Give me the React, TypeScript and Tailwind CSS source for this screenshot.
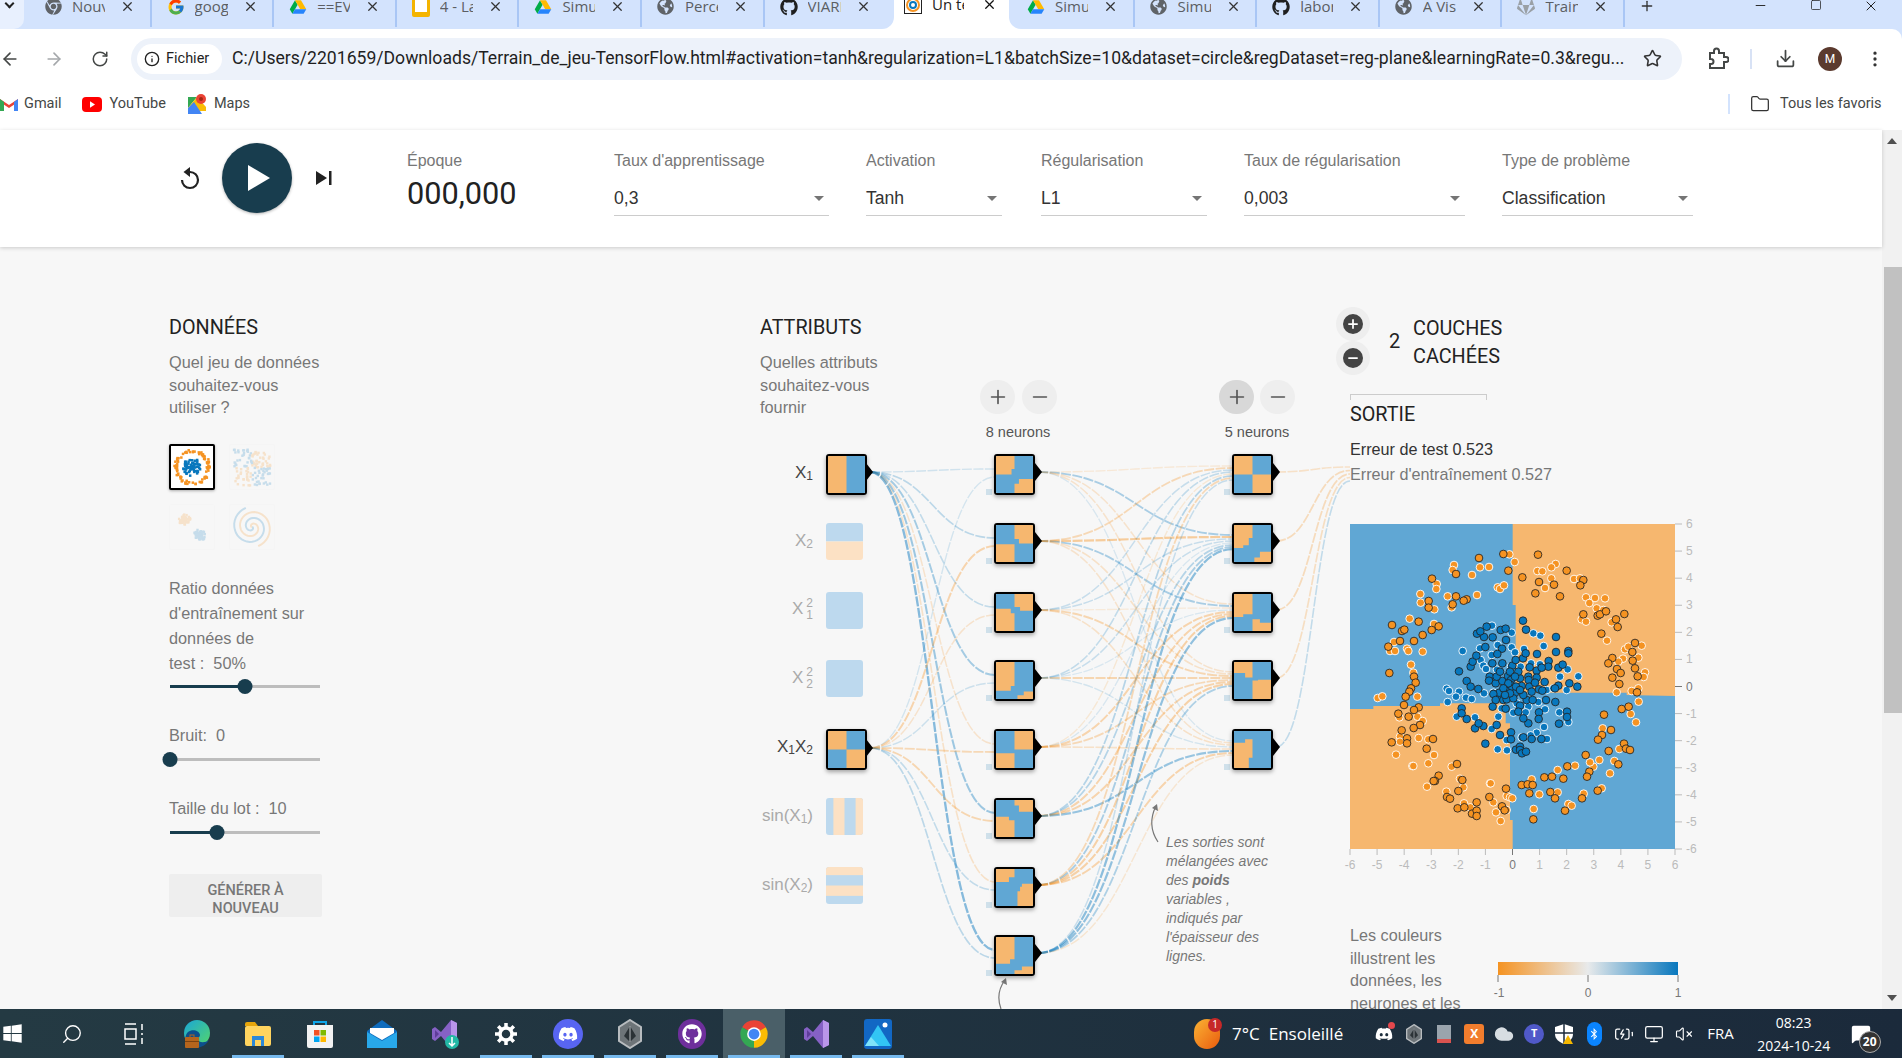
import React from 'react';
import { ArrowLeft, ArrowRight, RotateCw, Star, Download, MoreVertical, Folder, Info, X, Plus, Minus, Square, Search, VolumeX, Monitor, BatteryCharging, Cloud, MessageSquare } from 'lucide-react';
import { FaChrome, FaDiscord, FaGithub, FaGitlab, FaGlobeAmericas, FaWindows, FaBluetoothB } from 'react-icons/fa';
import { FcGoogle } from 'react-icons/fc';

const BLUE = '#0877bd';
const ORANGE = '#f59322';
const CELL_BLUE = '#60a7d4';
const CELL_ORANGE = '#f6b76f';

function seeded(seed: number) {
  let s = seed;
  return () => {
    s = (s * 16807) % 2147483647;
    return (s - 1) / 2147483646;
  };
}

/* ---------- small logos ---------- */

function DriveIcon({ size = 18 }: { size?: number }) {
  return (
    <svg width={size} height={size} viewBox="0 0 24 24">
      <path fill="#00ac47" d="M8 3 1 15l3.5 6 7-12z" />
      <path fill="#ffba00" d="M8 3h8l7 12h-8z" />
      <path fill="#2684fc" d="M4.5 21h15l3.5-6H8z" />
    </svg>
  );
}

function NoteIcon() {
  return (
    <svg width="18" height="20" viewBox="0 0 18 20">
      <rect x="0" y="0" width="18" height="20" rx="2" fill="#f4b400" />
      <rect x="3" y="3" width="12" height="12" fill="#fff" />
    </svg>
  );
}

function PlaygroundIcon() {
  return (
    <svg width="18" height="18" viewBox="0 0 18 18">
      <rect width="18" height="18" fill="#fff" stroke="#222" strokeWidth="2" />
      <circle cx="9" cy="9" r="6" fill="none" stroke={ORANGE} strokeWidth="2" />
      <circle cx="9" cy="9" r="3" fill="none" stroke={BLUE} strokeWidth="2" />
    </svg>
  );
}

function GmailIcon() {
  return (
    <svg width="18" height="14" viewBox="0 0 18 14">
      <path fill="#ea4335" d="M0 2 9 8l9-6v3l-9 6-9-6z" />
      <path fill="#4285f4" d="M14 5l4-3v12h-4z" />
      <path fill="#34a853" d="M0 2l4 3v9H0z" />
    </svg>
  );
}

function YoutubeIcon() {
  return (
    <svg width="20" height="15" viewBox="0 0 20 15">
      <rect width="20" height="15" rx="4" fill="#f00" />
      <path d="M8 4.2 13 7.5 8 10.800z" fill="#fff" />
    </svg>
  );
}

function MapsIcon() {
  return (
    <svg width="18" height="20" viewBox="0 0 18 20">
      <path fill="#34a853" d="M0 3h9L0 14z" />
      <path fill="#fbbc04" d="M0 14 9 3l9 10v4H0z" />
      <path fill="#4285f4" d="M0 14l6-6 8 12H0z" />
      <circle cx="13" cy="5" r="5" fill="#ea4335" />
      <circle cx="13" cy="5" r="2" fill="#a52714" />
    </svg>
  );
}

function ExtensionIcon() {
  return (
    <svg width="22" height="24" viewBox="0 0 22 24" fill="none" stroke="#444746" strokeWidth="2" className="ml-[25px]">
      <path d="M3 6h4V4a2.500 2.500 0 0 1 5 0v2h5v4h2a2 2 0 0 1 0 5h-2v6H3v-4h1a2.500 2.500 0 0 0 0-5H3z" />
    </svg>
  );
}

function EdgeIcon() {
  return (
    <svg width="30" height="30" viewBox="0 0 30 30">
      <defs>
        <linearGradient id="edge" x1="0" y1="0" x2="1" y2="1">
          <stop offset="0" stopColor="#1aa6d8" />
          <stop offset="1" stopColor="#54d66a" />
        </linearGradient>
      </defs>
      <circle cx="16" cy="14" r="13" fill="url(#edge)" />
      <path d="M9 27c-5-4-6-10-2-14 4-3 11-2 12 3 0 3-4 4-5 2 4 7 10 6 14 3-3 6-11 10-19 6z" fill="#0d4f8b" />
      <rect x="4" y="18" width="14" height="11" rx="1" fill="#b5651d" />
      <rect x="9" y="16" width="4" height="3" fill="none" stroke="#b5651d" />
      <rect x="4" y="22" width="14" height="1" fill="#7a4210" />
    </svg>
  );
}

function ExplorerIcon() {
  return (
    <svg width="28" height="26" viewBox="0 0 28 26">
      <path fill="#e6a50b" d="M1 3a2 2 0 0 1 2-2h8l3 4H1z" />
      <rect x="1" y="5" width="26" height="20" rx="2" fill="#ffd45f" />
      <path fill="#2b88d8" d="M8 25V15h12v10h-3v-6h-6v6z" />
    </svg>
  );
}

function StoreIcon() {
  return (
    <svg width="30" height="30" viewBox="0 0 30 30">
      <path d="M9 6V3h12v3" fill="none" stroke="#0ea5e9" strokeWidth="2" />
      <path fill="#f2f2f2" d="M2 6h26v21a2 2 0 0 1-2 2H4a2 2 0 0 1-2-2z" />
      <rect x="9" y="11" width="5.500" height="5.500" fill="#f25022" />
      <rect x="15.500" y="11" width="5.500" height="5.500" fill="#7fba00" />
      <rect x="9" y="17.500" width="5.500" height="5.500" fill="#00a4ef" />
      <rect x="15.500" y="17.500" width="5.500" height="5.500" fill="#ffb900" />
    </svg>
  );
}

function MailIcon() {
  return (
    <svg width="30" height="30" viewBox="0 0 30 30">
      <path fill="#0f6cbd" d="M15 1 30 12v17H0V12z" />
      <path fill="#fff" d="M3 9h24v5L15 21 3 14z" />
      <path fill="#28a8ea" d="M0 13l15 9 15-9v16H0z" />
    </svg>
  );
}

function VsIcon({ arrow = false }: { arrow?: boolean }) {
  return (
    <svg width="30" height="30" viewBox="0 0 30 30">
      <path fill="#8661c5" d="M3 10l3-2 6 5L22 1l6 3v22l-6 3-10-12-6 5-3-2z" />
      <path fill="#b995ea" d="M22 1l6 3v22l-6 3z" />
      <path fill="#5e3c99" d="M6 11v8l4-4z" />
      {arrow && <circle cx="23" cy="23" r="7" fill="#23b8a5" />}
      {arrow && <path d="M23 18v9m-3-3 3 3 3-3" stroke="#fff" strokeWidth="1.500" fill="none" />}
    </svg>
  );
}

function ChromeIcon() {
  return (
    <svg width="30" height="30" viewBox="0 0 24 24">
      <path fill="#ea4335" d="M12 1A11 11 0 0 1 21.500 6.500L12 12 2.500 6.500A11 11 0 0 1 12 1Z" />
      <path fill="#fbbc04" d="M21.500 6.500A11 11 0 0 1 12 23V12Z" />
      <path fill="#34a853" d="M2.500 6.500A11 11 0 0 0 12 23V12Z" />
      <circle cx="12" cy="12" r="5.500" fill="#fff" />
      <circle cx="12" cy="12" r="4.300" fill="#4285f4" />
    </svg>
  );
}

function PhotosIcon() {
  return (
    <svg width="28" height="30" viewBox="0 0 28 30">
      <rect width="28" height="30" rx="3" fill="#1267c4" />
      <path fill="#32c5f4" d="M1 27 14 6l13 21z" />
      <path fill="#7fe3f9" d="M1 27l6-9 8 9z" />
      <circle cx="21" cy="6" r="2.500" fill="#fff" />
    </svg>
  );
}

function HexIcon({ size = 30 }: { size?: number }) {
  return (
    <svg width={size * 0.8} height={size} viewBox="0 0 24 30">
      <path d="M12 1 23 8v14l-11 7-11-7V8z" fill="#6d7478" stroke="#b8bcbf" strokeWidth="2" />
      <path d="M12 7l6 10-6 6-6-6z" fill="#2b3236" />
      <path d="M12 7v16" stroke="#b8bcbf" />
    </svg>
  );
}

/* ---------- browser chrome ---------- */

const leftTabs: [React.ReactNode, string][] = [
  [<FaChrome size={17} color="#5f6368" />, 'Nouvel onglet'],
  [<FcGoogle size={18} />, 'google traduction'],
  [<DriveIcon />, '==EVAL'],
  [<NoteIcon />, '4 - Labo'],
  [<DriveIcon />, 'Simulation'],
  [<FaGlobeAmericas size={17} color="#5f6368" />, 'Perceptron'],
  [<FaGithub size={18} color="#1f1f1f" />, 'VIARENA'],
];

const rightTabs: [React.ReactNode, string][] = [
  [<DriveIcon />, 'Simulation'],
  [<FaGlobeAmericas size={17} color="#5f6368" />, 'Simulation'],
  [<FaGithub size={18} color="#1f1f1f" />, 'laboratoire'],
  [<FaGlobeAmericas size={17} color="#5f6368" />, 'A Visual'],
  [<FaGitlab size={18} color="#9aa0a6" />, 'Training'],
];

function Tab({ icon, title, last }: { icon: React.ReactNode; title: string; last?: boolean }) {
  return (
    <div className={`flex items-center w-[122.600px] h-[29px] pl-[15px] shrink-0 -mt-[5px] ${last ? '' : 'border-r-2 border-[#a9c6f5]'}`}>
      <span className="w-[18px] flex justify-center shrink-0 -mt-[11px]">{icon}</span>
      <span className="w-[33px] ml-[10px] -mt-[11px] overflow-hidden whitespace-nowrap text-[15px] text-[#5b5e63]">{title}</span>
      <X size={15} strokeWidth={2} className="ml-[15px] -mt-[11px] text-[#333] shrink-0" />
    </div>
  );
}

function TabStrip() {
  return (
    <div className="flex h-[29px] bg-white overflow-hidden font-['Open_Sans',sans-serif]">
      <div className="flex flex-1 items-center bg-[#d3e3fd] rounded-br-[12px] overflow-hidden">
        <div className="w-[24px] h-[29px] bg-[#e8f0fe] rounded-br-[10px] flex justify-center mr-[5px]">
          <span className="block w-[7px] h-[7px] border-r-2 border-b-2 border-[#222] rotate-45 -ml-[6px]" />
        </div>
        {leftTabs.map(([icon, title], i) => (
          <Tab key={i} icon={icon} title={title} last={i === leftTabs.length - 1} />
        ))}
      </div>
      <div className="flex items-center w-[115px] h-[29px] shrink-0 pl-[10px] bg-white -mt-[10px]">
        <PlaygroundIcon />
        <span className="w-[32px] ml-[10px] overflow-hidden whitespace-nowrap text-[15px] text-[#222]">Un terrain</span>
        <X size={15} strokeWidth={2} className="ml-[18px] text-[#111]" />
      </div>
      <div className="flex items-center w-[893px] shrink-0 bg-[#d3e3fd] rounded-bl-[12px] pl-[3px] overflow-hidden">
        {rightTabs.map(([icon, title], i) => (
          <Tab key={i} icon={icon} title={title} />
        ))}
        <Plus size={16} strokeWidth={2} className="ml-[14px] -mt-[18px] text-[#333]" />
        <Minus size={15} strokeWidth={1.500} className="ml-[98px] -mt-[18px] text-[#222]" />
        <Square size={12} strokeWidth={1.500} className="ml-[42px] -mt-[20px] text-[#222]" />
        <X size={16} strokeWidth={1.500} className="ml-[41px] -mt-[18px] text-[#222]" />
      </div>
    </div>
  );
}

function Toolbar() {
  return (
    <div className="bg-[#d3e3fd]">
      <div className="flex items-center h-[61px] pb-[2px] bg-white rounded-tr-[10px] font-['Roboto',sans-serif]">
        <ArrowLeft size={20} className="text-[#444746]" />
        <ArrowRight size={20} className="ml-[24px] text-[#a5a8ab]" />
        <RotateCw size={18} className="ml-[27px] text-[#444746]" />
        <div className="flex items-center w-[1551px] h-[42px] ml-[22px] rounded-full bg-[#edf2fa]">
          <div className="flex items-center gap-[6px] w-[85px] h-[30px] ml-[6px] pl-[7px] rounded-full bg-white text-[14.500px] text-[#1f1f1f]">
            <Info size={16} strokeWidth={2} />
            <span>Fichier</span>
          </div>
          <span className="ml-[10px] w-[1395px] overflow-hidden whitespace-nowrap text-[17.600px] text-[#1f1f1f]">
            C:/Users/2201659/Downloads/Terrain_de_jeu-TensorFlow.html#activation=tanh&amp;regularization=L1&amp;batchSize=10&amp;dataset=circle&amp;regDataset=reg-plane&amp;learningRate=0.3&amp;regu...
          </span>
          <Star size={19} className="ml-[16px] text-[#333]" />
        </div>
        <ExtensionIcon />
        <span className="w-[2px] h-[20px] ml-[21px] bg-[#d8e2f5]" />
        <Download size={21} className="ml-[23px] text-[#444746]" />
        <span className="flex items-center justify-center w-[24px] h-[24px] ml-[22px] rounded-full bg-[#5b3a2e] text-[12px] text-white">M</span>
        <MoreVertical size={20} className="ml-[23px] text-[#333]" />
      </div>
    </div>
  );
}

function Bookmarks() {
  return (
    <div className="flex items-center h-[40px] pb-[12px] bg-white text-[14.500px] text-[#444746] font-['Roboto',sans-serif]">
      <GmailIcon />
      <span className="ml-[6px]">Gmail</span>
      <span className="ml-[20px]"><YoutubeIcon /></span>
      <span className="ml-[8px]">YouTube</span>
      <span className="ml-[22px]"><MapsIcon /></span>
      <span className="ml-[8px]">Maps</span>
      <span className="ml-[1478px] w-[2px] h-[20px] bg-[#d3e3fd]" />
      <Folder size={20} strokeWidth={1.500} className="ml-[20px] text-[#333]" />
      <span className="ml-[10px]">Tous les favoris</span>
    </div>
  );
}

/* ---------- playground header ---------- */

function Dropdown({ label, value, width, left }: { label: string; value: string; width: string; left: string }) {
  return (
    <div className={`pt-[21px] ${width} ${left}`}>
      <div className="h-[20px] leading-[20px] text-[16px] text-[#777]">{label}</div>
      <div className="flex items-center justify-between mt-[7px] h-[38px] pt-[3px] border-b border-[#ccc] text-[17.600px] text-[#333]">
        <span>{value}</span>
        <span className="mr-[5px] mt-[1px] border-x-[5px] border-t-[5px] border-x-transparent border-t-[#757575]" />
      </div>
    </div>
  );
}

function Header() {
  return (
    <div className="relative z-10 flex items-start h-[117px] bg-white shadow-[0_1px_4px_rgba(0,0,0,0.18)] shrink-0">
      <svg width="24" height="24" viewBox="0 0 24 24" className="ml-[177px] mt-[36px]">
        <path d="M5 14a8 8 0 1 0 8-8h-2" fill="none" stroke="#222" strokeWidth="2.200" />
        <path d="M13 1 6.500 6 13 11z" fill="#222" />
      </svg>
      <div className="flex items-center justify-center w-[70px] h-[70px] ml-[21px] mt-[13px] pl-[3px] rounded-full bg-[#183d4e] shadow-[0_1px_3px_rgba(0,0,0,0.3)]">
        <svg width="22" height="26" viewBox="0 0 22 26"><path d="M0 0 22 13 0 26z" fill="#fff" /></svg>
      </div>
      <svg width="16" height="16" viewBox="0 0 16 16" className="ml-[24px] mt-[40px]">
        <path d="M0 1 11 8 0 15z" fill="#222" />
        <rect x="13" y="1" width="2.500" height="14" fill="#222" />
      </svg>
      <div className="ml-[75px] w-[207px] pt-[21px]">
        <div className="h-[20px] leading-[20px] text-[16px] text-[#777]">Époque</div>
        <div className="mt-[5px] text-[30.700px] leading-[36px] text-[#222] font-['Roboto',sans-serif]">000,000</div>
      </div>
      <Dropdown label="Taux d'apprentissage" value="0,3" width="w-[215px]" left="" />
      <Dropdown label="Activation" value="Tanh" width="w-[136px]" left="ml-[37px]" />
      <Dropdown label="Régularisation" value="L1" width="w-[166px]" left="ml-[39px]" />
      <Dropdown label="Taux de régularisation" value="0,003" width="w-[221px]" left="ml-[37px]" />
      <Dropdown label="Type de problème" value="Classification" width="w-[191px]" left="ml-[37px]" />
    </div>
  );
}

/* ---------- left column ---------- */

function CircleThumb() {
  const r = seeded(11);
  const dots: React.ReactNode[] = [];
  for (let i = 0; i < 85; i++) {
    const a = r() * Math.PI * 2;
    const d = 14.5 + r() * 3.5;
    dots.push(<rect key={i} x={20 + Math.cos(a) * d} y={20 + Math.sin(a) * d} width="2.500" height="2.500" fill={ORANGE} />);
  }
  for (let i = 0; i < 70; i++) {
    const a = r() * Math.PI * 2;
    const d = r() * 9;
    dots.push(<rect key={'b' + i} x={20 + Math.cos(a) * d} y={20 + Math.sin(a) * d} width="2.500" height="2.500" fill={BLUE} />);
  }
  return <svg viewBox="0 0 42 42" className="w-full h-full">{dots}</svg>;
}

function XorThumb() {
  const r = seeded(23);
  const dots: React.ReactNode[] = [];
  for (let i = 0; i < 130; i++) {
    const x = 3 + r() * 38;
    const y = 3 + r() * 38;
    dots.push(<rect key={i} x={x} y={y} width="2.500" height="2.500" fill={x < 22 === y < 22 ? BLUE : ORANGE} />);
  }
  return <svg viewBox="0 0 46 46" className="w-full h-full">{dots}</svg>;
}

function GaussThumb() {
  const r = seeded(37);
  const dots: React.ReactNode[] = [];
  for (let i = 0; i < 60; i++) {
    const a = r() * Math.PI * 2;
    const d = r() * 6;
    dots.push(<rect key={i} x={14 + Math.cos(a) * d} y={14 + Math.sin(a) * d} width="2.500" height="2.500" fill={ORANGE} />);
    dots.push(<rect key={'b' + i} x={30 + Math.cos(a + 1) * d} y={30 + Math.sin(a + 1) * d} width="2.500" height="2.500" fill={BLUE} />);
  }
  return <svg viewBox="0 0 46 46" className="w-full h-full">{dots}</svg>;
}

function spiralPath(offset: number) {
  const pts: string[] = [];
  for (let t = 0; t <= 60; t++) {
    const a = (t / 60) * Math.PI * 3.4 + offset;
    const d = (t / 60) * 21;
    pts.push(`${(23 + Math.cos(a) * d).toFixed(1)} ${(23 + Math.sin(a) * d).toFixed(1)}`);
  }
  return 'M' + pts.join('L');
}

function SpiralThumb() {
  return (
    <svg viewBox="0 0 46 46" className="w-full h-full" fill="none" strokeWidth="2">
      <path stroke={BLUE} d={spiralPath(0)} />
      <path stroke={ORANGE} d={spiralPath(Math.PI)} />
    </svg>
  );
}

function Slider({ pct }: { pct: number }) {
  return (
    <div className="relative h-[16px] w-[150px] ml-px flex items-center">
      <div className="w-full h-[3px] bg-[#bdbdbd]" />
      <div className="absolute left-0 h-[3px] bg-[#183d4e]" style={{ width: `${pct}%` }} />
      <div className="absolute w-[15px] h-[15px] rounded-full bg-[#183d4e] -translate-x-1/2" style={{ left: `${pct}%` }} />
    </div>
  );
}

function DataColumn() {
  return (
    <section className="w-[153px] shrink-0 pt-[69px]">
      <h4 className="h-[24px] leading-[24px] text-[19.800px] text-[#222] font-['Roboto',sans-serif]">DONNÉES</h4>
      <p className="mt-[11px] leading-[22.500px] text-[16.300px] text-[#777]">Quel jeu de données souhaitez-vous utiliser ?</p>
      <div className="grid grid-cols-[46px_46px] gap-x-[14px] gap-y-[14px] mt-[25px]">
        <div className="h-[46px] rounded-[2px] border-2 border-black bg-white shadow-[0_1px_3px_rgba(0,0,0,0.3)]"><CircleThumb /></div>
        <div className="h-[46px] rounded-[2px] border border-[#eee] opacity-20"><XorThumb /></div>
        <div className="h-[46px] rounded-[2px] border border-[#eee] opacity-20"><GaussThumb /></div>
        <div className="h-[46px] rounded-[2px] border border-[#eee] opacity-20"><SpiralThumb /></div>
      </div>
      <p className="mt-[26.500px] leading-[25px] text-[16.300px] text-[#777]">Ratio données d'entraînement sur données de<br />test :&nbsp; 50%</p>
      <div className="mt-[2.500px]"><Slider pct={50} /></div>
      <p className="mt-[28.500px] leading-[25px] text-[16.300px] text-[#777]">Bruit:&nbsp; 0</p>
      <div className="mt-[3px]"><Slider pct={0} /></div>
      <p className="mt-[29px] leading-[25px] text-[16.300px] text-[#777]">Taille du lot :&nbsp; 10</p>
      <div className="mt-[3px]"><Slider pct={31} /></div>
      <div className="flex items-end justify-center mt-[34px] h-[43px] rounded-[2px] bg-[#eee] text-center text-[14.500px] leading-[18px] font-medium text-[#777] font-['Roboto',sans-serif]"><span className="-mb-px">GÉNÉRER À<br />NOUVEAU</span></div>
    </section>
  );
}

/* ---------- network ---------- */

const BASE_X = 760;
const BASE_Y = 247;
const H1_TOPS = [454, 523, 592, 660, 729, 798, 867, 935];
const H2_TOPS = [454, 523, 592, 660, 729];

const H1_CELLS = [
  'M0 0H50V35H42V50H0Z M62 62H100V100H50V75H62Z',
  'M50 0H100V50H62V38H50Z M0 52H50V100H0Z',
  'M50 0H100V45H65V35H50Z M0 40H40V52H50V100H0Z',
  'M0 0H50V65H40V78H0Z M58 90H75V80H100V100H58Z',
  'M50 0H100V50H50Z M0 60H50V100H0Z',
  'M50 0H100V32H62V15H50Z M0 45H35V55H50V100H0Z',
  'M0 0H50V22H35V35H0Z M65 48H70V40H100V100H58V60H65Z',
  'M0 0H50V60H38V72H0Z M70 80H100V100H50V90H70Z',
];

const H2_CELLS = [
  'M0 0H50V50H0Z M50 50H100V100H50Z',
  'M0 0H50V35H40V55H25V62H0Z M55 88H70V72H100V100H55Z',
  'M0 0H50V55H25V62H0Z M50 68H70V78H100V100H50Z',
  'M0 0H50V42H30V30H0Z M50 50H65V48H100V100H50Z',
  'M0 32H30V22H50V72H40V100H0Z',
];

function Cell({ x, y, d }: { x: number; y: number; d: string }) {
  return (
    <div
      className="absolute w-[41px] h-[41px] rounded-[3px] border-2 border-black overflow-hidden shadow-[0_2px_4px_rgba(0,0,0,0.35)]"
      style={{ left: x - BASE_X, top: y - BASE_Y }}
    >
      <svg viewBox="0 0 100 100" preserveAspectRatio="none" className="w-full h-full block">
        <rect width="100" height="100" fill={CELL_BLUE} />
        <path d={d} fill={CELL_ORANGE} />
      </svg>
    </div>
  );
}

function PaleCell({ y, children }: { y: number; children: React.ReactNode }) {
  return (
    <div className="absolute w-[37px] h-[37px] rounded-[3px] overflow-hidden" style={{ left: 826 - BASE_X, top: y - BASE_Y }}>
      <svg viewBox="0 0 100 100" preserveAspectRatio="none" className="w-full h-full block">{children}</svg>
    </div>
  );
}

const PB = '#bdd9ee';
const PO = '#fce1c4';

function FeatureLabel({ y, on, children }: { y: number; on?: boolean; children: React.ReactNode }) {
  return (
    <div
      className={`absolute flex items-center justify-end w-[80px] h-[24px] text-[17px] ${on ? 'text-[#444]' : 'text-[#aaa]'}`}
      style={{ left: 733 - BASE_X, top: y - BASE_Y - 13 }}
    >
      {children}
    </div>
  );
}

function Squared({ i }: { i: number }) {
  return (
    <>
      X
      <span className="inline-flex flex-col ml-[3px] text-[12px] leading-[12px]">
        <span>2</span>
        <span>{i}</span>
      </span>
    </>
  );
}

// weights read off the picture: sign is the colour, size is the strength
const FROM_X1 = [0.12, 0.3, 0.25, 0.5, -0.2, 0.55, -0.25, 0.75];
const FROM_X1X2 = [0.1, -0.5, -0.2, 0.15, -0.4, -0.45, 0.25, 0.3];
const H1_TO_H2 = [
  [-0.1, 0.45, -0.2, -0.2, 0.06],
  [-0.4, -0.65, 0.45, -0.25, -0.2],
  [0.2, 0.2, -0.08, -0.45, -0.25],
  [0.25, 0.2, 0.05, -0.45, 0.1],
  [-0.12, 0.06, -0.5, -0.4, -0.25],
  [0.35, 0.35, -0.5, -0.5, 0.6],
  [-0.4, 0.45, -0.55, -0.55, -0.5],
  [0.2, 0.7, 0.65, 0.4, -0.15],
];
const H2_TO_OUT = [-0.25, -0.35, -0.35, -0.3, 0.25];

function Link({ x0, y0, x1, y1, w }: { x0: number; y0: number; x1: number; y1: number; w: number }) {
  const mid = (x0 + x1) / 2;
  const s = Math.abs(w);
  return (
    <path
      d={`M${x0} ${y0}C${mid} ${y0} ${mid} ${y1} ${x1} ${y1}`}
      fill="none"
      stroke={w > 0 ? BLUE : ORANGE}
      strokeOpacity={0.1 + s * 0.5}
      strokeWidth={1.2 + s * 1.5}
      strokeDasharray="10 1.500"
    />
  );
}

function NetworkLinks() {
  const arrow = (x: number, y: number, key: string) => <path key={key} d={`M${x} ${y - 9}L${x + 7} ${y}L${x} ${y + 9}Z`} fill="#000" />;
  return (
    <svg viewBox="760 247 600 762" className="absolute left-0 top-0 w-[600px] h-[762px]">
      {FROM_X1.map((w, i) => <Link key={'a' + i} x0={870} y0={472} x1={995} y1={H1_TOPS[i] + 15} w={w} />)}
      {FROM_X1X2.map((w, i) => <Link key={'b' + i} x0={870} y0={748} x1={995} y1={H1_TOPS[i] + 23} w={w} />)}
      {H1_TO_H2.map((row, i) =>
        row.map((w, j) => <Link key={`c${i}${j}`} x0={1038} y0={H1_TOPS[i] + 18} x1={1233} y1={H2_TOPS[j] + 12 + i * 2} w={w} />)
      )}
      {H2_TO_OUT.map((w, i) => <Link key={'d' + i} x0={1276} y0={H2_TOPS[i] + 18} x1={1350} y1={467 + i * 3.5} w={w} />)}
      {H1_TOPS.map((t, i) => <rect key={'s' + i} x={986} y={t + 35} width={6} height={6} fill="#cfe0ea" />)}
      {H2_TOPS.map((t, i) => <rect key={'t' + i} x={1224} y={t + 35} width={6} height={6} fill="#cfe0ea" />)}
      {arrow(866, 472, 'x1')}
      {arrow(866, 748, 'x2')}
      {H1_TOPS.map((t, i) => arrow(1035, t + 18, 'h' + i))}
      {H2_TOPS.map((t, i) => arrow(1273, t + 18, 'k' + i))}
      <path d="M1158 842C1150 830 1150 818 1156 806" fill="none" stroke="#777" strokeWidth="1.200" />
      <path d="M1152 808 1157 804 1158 811Z" fill="#777" />
      <path d="M1001 1009C997 998 999 988 1005 980" fill="none" stroke="#777" strokeWidth="1.200" />
      <path d="M1001 982 1006 978 1007 985Z" fill="#777" />
    </svg>
  );
}

function CircleButton({ x, dark, children }: { x: number; dark?: boolean; children: React.ReactNode }) {
  return (
    <div
      className={`absolute flex items-center justify-center w-[35px] h-[34px] rounded-full ${dark ? 'bg-[#d8d8d8]' : 'bg-[#eee]'} text-[#555]`}
      style={{ left: x - 17 - BASE_X, top: 380 - BASE_Y }}
    >
      {children}
    </div>
  );
}

function Network() {
  return (
    <section className="relative w-[590px] shrink-0 ml-[438px] pt-[69px]">
      <NetworkLinks />
      <h4 className="relative h-[24px] leading-[24px] text-[19.800px] text-[#222] font-['Roboto',sans-serif]">ATTRIBUTS</h4>
      <p className="relative mt-[11px] w-[120px] leading-[22.500px] text-[16.300px] text-[#777]">Quelles attributs souhaitez-vous fournir</p>

      <CircleButton x={997}><Plus size={22} strokeWidth={1.800} /></CircleButton>
      <CircleButton x={1039}><Minus size={22} strokeWidth={1.800} /></CircleButton>
      <CircleButton x={1236} dark><Plus size={22} strokeWidth={1.800} /></CircleButton>
      <CircleButton x={1277}><Minus size={22} strokeWidth={1.800} /></CircleButton>
      <div className="absolute w-[100px] text-center text-[14.500px] leading-[20px] text-[#555]" style={{ left: 1018 - 50 - BASE_X, top: 422 - BASE_Y }}>8 neurons</div>
      <div className="absolute w-[100px] text-center text-[14.500px] leading-[20px] text-[#555]" style={{ left: 1257 - 50 - BASE_X, top: 422 - BASE_Y }}>5 neurons</div>

      <FeatureLabel y={474} on>X<sub className="text-[12px]">1</sub></FeatureLabel>
      <FeatureLabel y={542}>X<sub className="text-[12px]">2</sub></FeatureLabel>
      <FeatureLabel y={610}><Squared i={1} /></FeatureLabel>
      <FeatureLabel y={679}><Squared i={2} /></FeatureLabel>
      <FeatureLabel y={748} on>X<sub className="text-[12px]">1</sub>X<sub className="text-[12px]">2</sub></FeatureLabel>
      <FeatureLabel y={817}>sin(X<sub className="text-[12px]">1</sub>)</FeatureLabel>
      <FeatureLabel y={886}>sin(X<sub className="text-[12px]">2</sub>)</FeatureLabel>

      <Cell x={826} y={454} d="M0 0H50V100H0Z" />
      <PaleCell y={523}><rect width="100" height="50" fill={PB} /><rect y="50" width="100" height="50" fill={PO} /></PaleCell>
      <PaleCell y={592}><rect width="100" height="100" fill={PB} /></PaleCell>
      <PaleCell y={660}><rect width="100" height="100" fill={PB} /></PaleCell>
      <Cell x={826} y={729} d="M0 0H50V50H0Z M50 50H100V100H50Z" />
      <PaleCell y={798}>
        <rect width="100" height="100" fill={PB} />
        <rect x="20" width="30" height="100" fill={PO} />
        <rect x="80" width="20" height="100" fill={PO} />
      </PaleCell>
      <PaleCell y={867}>
        <rect width="100" height="100" fill={PB} />
        <rect width="100" height="22" fill={PO} />
        <rect y="50" width="100" height="28" fill={PO} />
      </PaleCell>

      {H1_TOPS.map((t, i) => <Cell key={i} x={994} y={t} d={H1_CELLS[i]} />)}
      {H2_TOPS.map((t, i) => <Cell key={i} x={1232} y={t} d={H2_CELLS[i]} />)}

      <p className="absolute w-[105px] text-[14px] leading-[19px] italic text-[#777]" style={{ left: 1166 - BASE_X, top: 833 - BASE_Y }}>
        Les sorties sont mélangées avec des <b>poids</b> variables , indiqués par l'épaisseur des lignes.
      </p>
    </section>
  );
}

/* ---------- output ---------- */

const ORANGE_TRAIN = [417,114,490,102,594,104,680,152,505,152,348,162,276,176,547,172,597,186,642,194,730,180,721,196,586,220,660,229,348,229,266,243,380,238,371,242,338,253,266,263,730,283,853,282,773,287,780,283,798,274,828,298,833,321,156,315,236,305,296,319,275,330,186,333,193,329,248,345,180,363,222,363,145,380,784,341,885,369,877,396,817,414,805,430,878,422,831,447,885,445,842,459,148,459,222,470,893,469,817,473,227,488,838,492,891,517,213,505,208,515,197,530,192,555,236,562,222,570,175,581,206,590,845,567,866,560,792,584,240,615,221,624,185,631,813,630,786,645,774,659,155,667,201,655,201,670,279,657,260,686,852,671,858,686,870,690,806,693,737,705,835,733,682,739,351,732,748,755,741,770,613,772,636,770,670,776,296,767,285,783,281,783,367,780,545,795,563,793,578,795,498,806,355,813,631,816,568,820,645,835,773,812,726,835,448,831,321,831,330,836,410,847,353,865,373,862,486,859,494,871,675,872,396,881,410,872,410,888,580,898];
const ORANGE_TEST = [342,135,338,150,420,142,447,141,508,103,524,126,396,165,647,132,634,142,592,153,607,154,634,175,615,204,702,177,720,175,290,192,289,207,241,222,242,248,323,229,411,225,473,202,480,207,492,196,738,232,765,234,795,235,748,249,770,265,790,270,335,262,283,268,209,296,282,312,725,298,738,305,815,307,162,366,150,393,165,393,201,386,205,393,248,395,801,362,855,388,865,380,905,377,849,416,895,413,835,425,213,434,220,458,915,457,911,471,895,505,875,513,830,517,113,534,127,529,232,530,896,545,872,582,888,607,178,592,232,590,248,603,788,625,180,650,236,654,180,665,265,658,168,704,282,705,838,687,760,740,750,727,778,720,823,723,217,738,220,738,265,730,335,740,705,737,653,750,810,760,575,778,360,776,370,802,450,790,452,790,261,800,319,815,785,805,731,821,653,817,598,823,500,828,510,832,517,835,460,847,372,850,685,852,695,857,581,867,468,877,391,862,482,903,500,870];
const BLUE_TRAIN = [549,302,558,329,648,351,648,396,685,393,685,400,591,402,626,423,625,440,655,443,668,434,688,490,712,500,655,497,645,505,618,540,646,546,681,575,681,591,597,577,596,597,657,611,565,610,604,657,575,657,550,652,513,637,513,658,480,645,436,671,528,689,540,680,540,690,546,700,558,695,470,615,430,618,405,625,416,610,380,597,365,565,365,580,380,483,357,454,392,440,398,425,409,407,436,381,432,351,411,341,421,334,440,320,458,352,482,330,497,326,498,360,486,386,472,402,457,430,487,430,517,437,549,415,557,400,527,420,569,442,590,452,605,443,449,470,447,482,467,490,487,483,504,468,513,480,540,475,565,470,566,480,590,473,614,486,512,495,517,505,545,498,568,500,585,488,597,508,607,512,497,512,478,518,460,522,467,540,490,540,500,538,525,519,520,535,540,557,560,540,578,540,497,566,458,560,535,575,550,595,392,500,415,507,505,490,528,500,510,455,470,470,535,455,490,505,550,525,575,515,510,520,495,525,540,510,525,470,480,455];
const BLUE_TEST = [456,317,515,338,580,340,601,347,611,378,473,375,420,385,515,382,525,397,552,387,368,393,455,405,422,420,430,437,438,447,471,449,513,440,600,433,573,430,542,440,683,448,715,469,660,470,320,506,327,513,357,515,348,530,323,546,378,533,395,537,432,520,460,518,480,530,620,510,680,510,640,505,565,560,595,546,615,568,658,577,685,606,612,621,621,657,590,638,572,646,545,652,500,660,473,688,501,691,455,627,405,592,350,590,475,590,520,578,557,577,485,565,530,550];

function Dots({ data, fill, stroke, opacity }: { data: number[]; fill: string; stroke: string; opacity: number }) {
  const items: React.ReactNode[] = [];
  for (let i = 0; i < data.length; i += 2) {
    items.push(<circle key={i} cx={data[i]} cy={data[i + 1]} r="11.500" fill={fill} stroke={stroke} strokeOpacity={opacity} strokeWidth="3" />);
  }
  return <>{items}</>;
}

function Plot() {
  const ticks = [-6, -5, -4, -3, -2, -1, 0, 1, 2, 3, 4, 5, 6];
  const step = 325 / 12;
  return (
    <svg width="350" height="355" className="block overflow-visible">
      <svg x="0" y="0" width="325" height="325" viewBox="30 12 975 975">
        <rect x="30" y="12" width="975" height="975" fill={CELL_BLUE} />
        <path fill={CELL_ORANGE} d="M518 12H1005V528L860 525V518H527V255H518Z" />
        <path fill={CELL_ORANGE} d="M30 567H100V558H300V550H497V610H510V900H518V987H30Z" />
        <Dots data={ORANGE_TEST} fill={ORANGE} stroke="#fff" opacity={0.9} />
        <Dots data={BLUE_TEST} fill={BLUE} stroke="#fff" opacity={0.9} />
        <Dots data={ORANGE_TRAIN} fill={ORANGE} stroke="#222" opacity={0.85} />
        <Dots data={BLUE_TRAIN} fill={BLUE} stroke="#222" opacity={0.85} />
      </svg>
      {ticks.map((t) => {
        const p = (t + 6) * step;
        const c = t === 0 ? '#777' : '#bbb';
        return (
          <g key={t} fontSize="12" fontFamily="Liberation Sans, sans-serif" fill={c}>
            <line x1={p} y1={325} x2={p} y2={331} stroke={c} />
            <text x={p} y={345} textAnchor="middle">{t}</text>
            <line x1={325} y1={325 - p} x2={332} y2={325 - p} stroke={c} />
            <text x={336} y={329 - p}>{t}</text>
          </g>
        );
      })}
    </svg>
  );
}

function Output() {
  return (
    <section className="w-[345px] shrink-0 pt-[60px]">
      <div className="flex items-center text-[#222] font-['Roboto',sans-serif]">
        <div className="-ml-[14px] flex flex-col">
          <div className="flex items-center justify-center w-[34px] h-[34px] rounded-full bg-[#eee]">
            <span className="flex items-center justify-center w-[20px] h-[20px] rounded-full bg-[#444] text-white"><Plus size={14} strokeWidth={3} /></span>
          </div>
          <div className="flex items-center justify-center w-[34px] h-[34px] rounded-full bg-[#eee]">
            <span className="flex items-center justify-center w-[20px] h-[20px] rounded-full bg-[#444] text-white"><Minus size={14} strokeWidth={3} /></span>
          </div>
        </div>
        <span className="ml-[19px] w-[24px] text-[20px]">2</span>
        <span className="mt-[4px] text-[19.800px] leading-[28px]">COUCHES<br />CACHÉES</span>
      </div>
      <div className="mt-[19px] w-[137px] h-[6px] border-t border-x border-[#ccc]" />
      <h4 className="mt-[3px] h-[24px] leading-[24px] text-[19.800px] text-[#222] font-['Roboto',sans-serif]">SORTIE</h4>
      <div className="mt-[10px] h-[24px] leading-[24px] text-[16.200px] text-[#333]">Erreur de test 0.523</div>
      <div className="mt-px h-[24px] leading-[24px] text-[16.200px] text-[#777]">Erreur d'entraînement 0.527</div>
      <div className="mt-[38px]"><Plot /></div>
      <div className="flex items-start mt-[45px]">
        <p className="w-[148px] pr-[20px] leading-[22.500px] text-[16.200px] text-[#777]">Les couleurs illustrent les données, les neurones et les poids.</p>
        <div className="mt-[38px]">
          <div className="w-[180px] h-[13px] bg-[linear-gradient(to_right,#f59322,#e8eaeb,#0877bd)]" />
          <svg width="190" height="26" className="block overflow-visible">
            <g stroke="#777">
              <line x1="0" y1="0" x2="0" y2="7" />
              <line x1="90" y1="0" x2="90" y2="7" />
              <line x1="180" y1="0" x2="180" y2="7" />
            </g>
            <g fontSize="12" fill="#777" fontFamily="Liberation Sans, sans-serif" textAnchor="middle">
              <text x="1" y="22">-1</text>
              <text x="90" y="22">0</text>
              <text x="180" y="22">1</text>
            </g>
          </svg>
        </div>
      </div>
    </section>
  );
}

function Scrollbar() {
  return (
    <div className="relative w-[20px] shrink-0 bg-[#f1f1f1]">
      <span className="absolute left-[5px] top-[8px] border-x-[5px] border-b-[6px] border-x-transparent border-b-[#505050]" />
      <div className="absolute left-[2px] right-0 top-[137px] h-[446px] bg-[#c1c1c1]" />
      <span className="absolute left-[5px] bottom-[8px] border-x-[5px] border-t-[6px] border-x-transparent border-t-[#505050]" />
    </div>
  );
}

/* ---------- taskbar ---------- */

const DockItem = ({ children, active, on }: { children: React.ReactNode; active?: boolean; on?: boolean }) => (
  <div className={`relative flex items-center justify-center w-[62px] h-full ${active ? 'bg-[#4a5f68]' : ''}`}>
    {children}
    {on && <span className="absolute left-[5px] right-[5px] bottom-0 h-[3px] bg-[#76b9ed]" />}
  </div>
);

function Tray({ children, w = 'w-[30px]' }: { children: React.ReactNode; w?: string }) {
  return <span className={`flex items-center justify-center ${w} h-full`}>{children}</span>;
}

function Taskbar() {
  return (
    <div className="flex items-center h-[49px] shrink-0 bg-gradient-to-r from-[#243a43] to-[#1b2a3b] text-white font-['Open_Sans',sans-serif]">
      <div className="flex items-center w-[41px] h-full pl-[2px]"><FaWindows size={21} /></div>
      <DockItem><Search size={22} strokeWidth={1.500} className="-scale-x-100" /></DockItem>
      <DockItem>
        <svg width="20" height="22" viewBox="0 0 20 22" fill="none" stroke="#fff" strokeWidth="1.500">
          <path d="M1 1h11M1 21h11" />
          <rect x="1" y="6" width="11" height="10" />
          <path d="M18 1v6M18 10v2M18 15v6" />
        </svg>
      </DockItem>
      <DockItem><EdgeIcon /></DockItem>
      <DockItem on><ExplorerIcon /></DockItem>
      <DockItem><StoreIcon /></DockItem>
      <DockItem><MailIcon /></DockItem>
      <DockItem><VsIcon arrow /></DockItem>
      <DockItem on>
        <svg width="24" height="24" viewBox="0 0 24 24" fill="none" stroke="#fff">
          <circle cx="12" cy="12" r="6" strokeWidth="3.500" />
          <path d="M12 1v4M12 19v4M1 12h4M19 12h4M4.200 4.200l3 3M16.800 16.800l3 3M19.800 4.200l-3 3M7.200 16.800l-3 3" strokeWidth="3.500" />
        </svg>
      </DockItem>
      <DockItem on>
        <span className="flex items-center justify-center w-[30px] h-[30px] rounded-full bg-[#5865f2]"><FaDiscord size={20} /></span>
      </DockItem>
      <DockItem on><HexIcon /></DockItem>
      <DockItem on>
        <span className="flex items-center justify-center w-[28px] h-[30px] rounded-full bg-[#6e2f9c]"><FaGithub size={20} /></span>
      </DockItem>
      <DockItem active on><ChromeIcon /></DockItem>
      <DockItem on><VsIcon /></DockItem>
      <DockItem on><PhotosIcon /></DockItem>

      <span className="relative flex items-center justify-center ml-[285px] w-[26px] h-[30px] rounded-full bg-gradient-to-br from-[#f9b233] to-[#e8590c]">
        <span className="absolute -right-[2px] -top-[1px] flex items-center justify-center w-[14px] h-[14px] rounded-full bg-[#c62828] text-[10px]">1</span>
      </span>
      <span className="ml-[12px] text-[17px] whitespace-nowrap">7°C</span>
      <span className="ml-[9px] text-[17px] whitespace-nowrap">Ensoleillé</span>
      <div className="flex items-center h-full ml-[26px]">
        <Tray>
          <span className="relative">
            <FaDiscord size={18} />
            <span className="absolute -right-[2px] -top-[3px] w-[7px] h-[7px] rounded-full bg-[#e5484d]" />
          </span>
        </Tray>
        <Tray><HexIcon size={20} /></Tray>
        <Tray><span className="block w-[14px] h-[18px] bg-[#9aa4ad] border-b-4 border-[#d9534f]" /></Tray>
        <Tray><span className="flex items-center justify-center w-[20px] h-[20px] rounded-[3px] bg-[#f27d2d] text-[12px] font-bold">X</span></Tray>
        <Tray><Cloud size={20} fill="#d7dde2" color="#d7dde2" /></Tray>
        <Tray><span className="flex items-center justify-center w-[20px] h-[20px] rounded-full bg-[#5059c9] text-[11px] font-bold">T</span></Tray>
        <Tray>
          <svg width="18" height="20" viewBox="0 0 18 20">
            <path d="M9 0 18 3v7c0 5-4 8-9 10-5-2-9-5-9-10V3z" fill="#fff" />
            <path d="M9 0v20M0 9h18" stroke="#1b2a3b" strokeWidth="1.500" />
            <path d="M13 11l5 9H8z" fill="#f5b800" />
          </svg>
        </Tray>
        <Tray><span className="flex items-center justify-center w-[15px] h-[24px] rounded-full bg-[#0a84ff]"><FaBluetoothB size={12} /></span></Tray>
        <Tray><BatteryCharging size={20} strokeWidth={1.500} /></Tray>
        <Tray><Monitor size={20} strokeWidth={1.500} /></Tray>
        <Tray><VolumeX size={18} strokeWidth={1.500} /></Tray>
      </div>
      <span className="ml-[8px] text-[15px]">FRA</span>
      <div className="ml-[20px] w-[80px] flex flex-col items-center text-[14px] leading-[23px] whitespace-nowrap">
        <span>08:23</span>
        <span>2024-10-24</span>
      </div>
      <span className="relative ml-[16px]">
        <MessageSquare size={22} fill="#fff" strokeWidth={0} />
        <span className="absolute -right-[9px] -bottom-[8px] flex items-center justify-center w-[22px] h-[22px] rounded-full border border-[#aaa] bg-[#333] text-[12px] font-bold">20</span>
      </span>
    </div>
  );
}

export default function App() {
  return (
    <div className="flex flex-col w-[1902px] h-[1058px] overflow-hidden bg-white font-['Liberation_Sans',Arial,sans-serif]">
      <TabStrip />
      <Toolbar />
      <Bookmarks />
      <div className="flex flex-1 min-h-0">
        <div className="flex flex-col flex-1 min-w-0">
          <Header />
          <main className="flex flex-1 min-h-0 pl-[169px] overflow-hidden bg-[#f7f7f7]">
            <DataColumn />
            <Network />
            <Output />
          </main>
        </div>
        <Scrollbar />
      </div>
      <Taskbar />
    </div>
  );
}
